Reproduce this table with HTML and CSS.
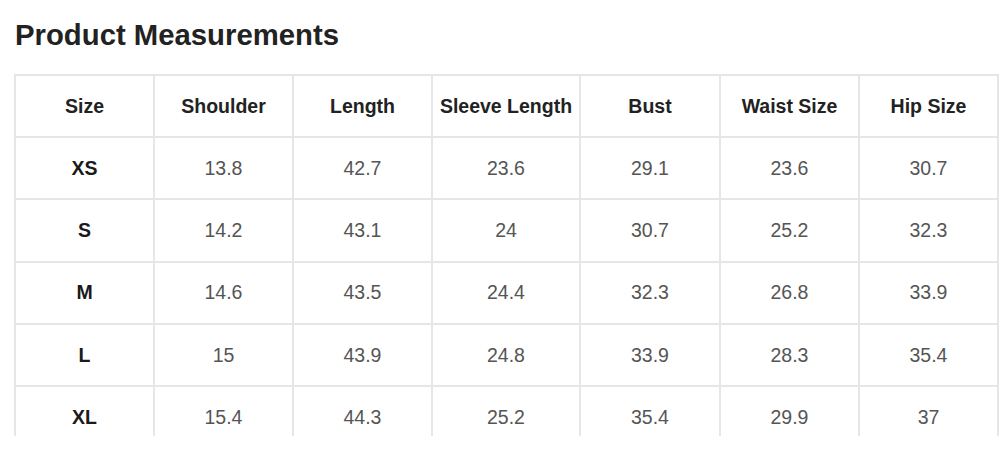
FILE: index.html
```html
<!DOCTYPE html>
<html lang="en">
<head>
<meta charset="utf-8">
<title>Product Measurements</title>
<link rel="stylesheet" href="styles.css">
</head>
<body>
<main class="page">
  <h1 class="title">Product Measurements</h1>
  <div class="table-wrap">
    <table class="measure">
      <thead>
        <tr>
          <th class="c-std">Size</th>
          <th class="c-std">Shoulder</th>
          <th class="c-std">Length</th>
          <th class="c-wide">Sleeve Length</th>
          <th class="c-bust">Bust</th>
          <th class="c-std">Waist Size</th>
          <th class="c-std">Hip Size</th>
        </tr>
      </thead>
      <tbody>
        <tr><th class="size">XS</th><td>13.8</td><td>42.7</td><td>23.6</td><td>29.1</td><td>23.6</td><td>30.7</td></tr>
        <tr><th class="size">S</th><td>14.2</td><td>43.1</td><td>24</td><td>30.7</td><td>25.2</td><td>32.3</td></tr>
        <tr><th class="size">M</th><td>14.6</td><td>43.5</td><td>24.4</td><td>32.3</td><td>26.8</td><td>33.9</td></tr>
        <tr><th class="size">L</th><td>15</td><td>43.9</td><td>24.8</td><td>33.9</td><td>28.3</td><td>35.4</td></tr>
        <tr><th class="size">XL</th><td>15.4</td><td>44.3</td><td>25.2</td><td>35.4</td><td>29.9</td><td>37</td></tr>
      </tbody>
    </table>
  </div>
</main>
</body>
</html>
```
FILE: styles.css
```css
html, body {
  margin: 0;
  padding: 0;
  background: #ffffff;
}

body {
  font-family: "Liberation Sans", Arial, Helvetica, sans-serif;
  color: #222222;
}

.page {
  padding: 19px 0 0 14px;
}

.title {
  margin: 0 0 0 1px;
  font-size: 29.3px;
  line-height: 32px;
  font-weight: 700;
  color: #222222;
}

.table-wrap {
  margin-top: 23px;
  height: 362px;
  overflow: hidden;
}

.measure {
  table-layout: fixed;
  width: 985px;
  border-collapse: separate;
  border-spacing: 0;
  border-left: 2px solid #e6e6e6;
  border-top: 2px solid #e6e6e6;
  font-size: 19.5px;
}

.measure th,
.measure td {
  box-sizing: border-box;
  height: 62.3px;
  padding: 0;
  text-align: center;
  vertical-align: middle;
  border-right: 2px solid #e6e6e6;
  border-bottom: 2px solid #e6e6e6;
}

.measure thead th {
  height: 62px;
  font-weight: 700;
  color: #222222;
}

.c-std { width: 139px; }
.c-wide { width: 148px; }
.c-bust { width: 140px; }

.measure .size {
  font-weight: 700;
  color: #1a1a1a;
}

.measure td {
  color: #555555;
  font-weight: 400;
}
```
